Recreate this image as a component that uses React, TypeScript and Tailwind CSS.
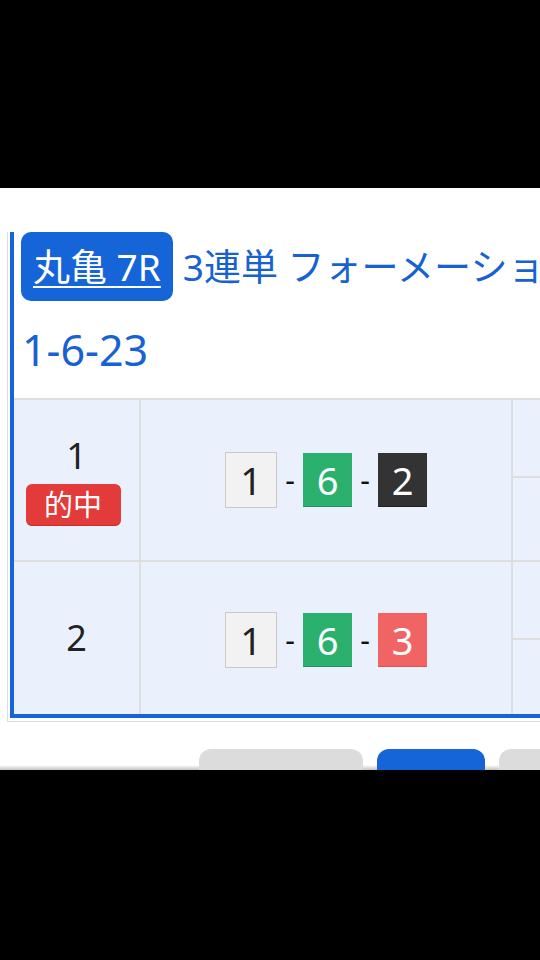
import React from "react";

const font = { fontFamily: '"Noto Sans", "Noto Sans CJK JP", sans-serif' };

function Box({ n, kind }: { n: string; kind: "white" | "green" | "dark" | "red" }) {
  if (kind === "white") {
    return (
      <div className="w-[52px] h-[56px] flex items-center justify-center bg-[#f2f2f2] border border-[#c9c9c9] text-[38px] leading-none text-[#222]">
        {n}
      </div>
    );
  }
  const bg = kind === "green" ? "bg-[#2bb06e] border-b border-[#24965d]" : kind === "dark" ? "bg-[#333333] border-b border-[#222]" : "bg-[#f06464] border-b border-[#d85555]";
  return (
    <div className={`w-[49px] h-[54px] flex items-center justify-center ${bg} text-[38px] leading-none text-white`}>
      {n}
    </div>
  );
}

function Dash() {
  return <div className="w-[26px] text-center text-[30px] leading-none text-[#111]">-</div>;
}

function Combo({ a, b, c, cKind }: { a: string; b: string; c: string; cKind: "dark" | "red" }) {
  return (
    <div className="flex items-center">
      <Box n={a} kind="white" />
      <Dash />
      <Box n={b} kind="green" />
      <Dash />
      <Box n={c} kind={cKind} />
    </div>
  );
}

export default function App() {
  return (
    <div className="w-[540px] h-[960px] bg-black flex flex-col overflow-hidden" style={font}>
      <div className="h-[188px] shrink-0 bg-black" />
      <div className="relative h-[582px] shrink-0 bg-white overflow-hidden">
        <div className="pt-[44px] pl-[7px]">
          <div className="w-max border-l border-b border-[#dcdcdc] pl-[2px] pb-[3px]">
            <div className="border-l-4 border-b-4 border-[#1565d8]">
              <div className="flex items-center h-[69px] pl-[7px] whitespace-nowrap">
                <div className="h-[69px] px-[12px] flex items-center rounded-[10px] bg-[#1565d8] text-white text-[37px] leading-none">
                  <span className="underline decoration-2 underline-offset-[5px]">丸亀 7R</span>
                </div>
                <div className="ml-[10px] text-[37px] leading-none text-[#1762d0]">3連単 フォーメーション</div>
              </div>
              <div className="h-[97px] flex items-center pl-[8px] text-[43px] leading-none text-[#1762d0]">1-6-23</div>
              <div className="border-t-2 border-[#dedede] bg-[#eaf1fc]">
                <div className="flex h-[160px]">
                  <div className="w-[125px] flex flex-col items-center justify-center">
                    <div className="h-[44px] text-[36px] leading-[44px] text-[#222]">1</div>
                    <div className="mt-[6px] mr-[7px] w-[95px] h-[42px] rounded-[6px] bg-[#e33a3a] border-b border-[#c92e2e] flex items-center justify-center text-white text-[29px] leading-none">
                      的中
                    </div>
                  </div>
                  <div className="w-[372px] border-l-2 border-[#dedede] flex items-center justify-center">
                    <Combo a="1" b="6" c="2" cKind="dark" />
                  </div>
                  <div className="w-[200px] border-l-2 border-[#dedede] flex flex-col">
                    <div className="h-[78px] border-b-2 border-[#dedede]" />
                    <div className="flex-1" />
                  </div>
                </div>
                <div className="flex h-[154px] border-t-2 border-[#dedede]">
                  <div className="w-[125px] flex items-center justify-center text-[36px] leading-none text-[#222]">2</div>
                  <div className="w-[372px] border-l-2 border-[#dedede] flex items-center justify-center pt-[4px]">
                    <Combo a="1" b="6" c="3" cKind="red" />
                  </div>
                  <div className="w-[200px] border-l-2 border-[#dedede] flex flex-col">
                    <div className="h-[78px] border-b-2 border-[#dedede]" />
                    <div className="flex-1" />
                  </div>
                </div>
              </div>
            </div>
          </div>
          <div className="relative z-10 mt-[27px] pl-[192px] flex gap-[14px] w-max">
            <div className="w-[164px] h-[48px] rounded-[12px] bg-[#dcdcdc]" />
            <div className="w-[108px] h-[48px] rounded-[12px] bg-[#1565d8]" />
            <div className="w-[164px] h-[48px] rounded-[12px] bg-[#dcdcdc]" />
          </div>
        </div>
        <div className="absolute left-0 right-0 bottom-0 h-[5px] bg-gradient-to-b from-white to-[#c4c4c4]" />
      </div>
      <div className="flex-1 bg-black" />
    </div>
  );
}
